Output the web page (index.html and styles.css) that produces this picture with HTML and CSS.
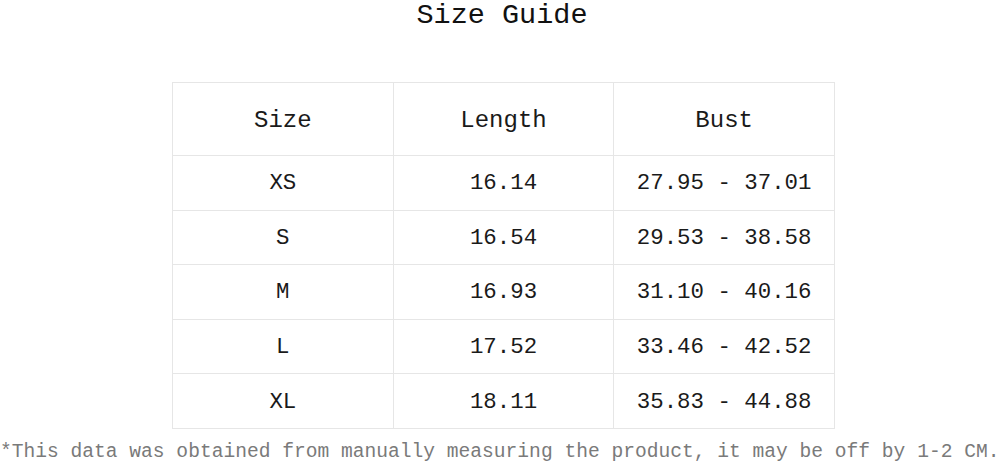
FILE: index.html
```html
<!DOCTYPE html>
<html>
<head>
<meta charset="utf-8">
<link rel="stylesheet" href="styles.css">
</head>
<body>
<div class="page">
  <h1 class="title">Size Guide</h1>
  <div class="table-wrap">
    <table class="sizes">
      <thead>
        <tr class="head-row"><th>Size</th><th>Length</th><th>Bust</th></tr>
      </thead>
      <tbody>
        <tr><td>XS</td><td>16.14</td><td>27.95 - 37.01</td></tr>
        <tr><td>S</td><td>16.54</td><td>29.53 - 38.58</td></tr>
        <tr><td>M</td><td>16.93</td><td>31.10 - 40.16</td></tr>
        <tr><td>L</td><td>17.52</td><td>33.46 - 42.52</td></tr>
        <tr><td>XL</td><td>18.11</td><td>35.83 - 44.88</td></tr>
      </tbody>
    </table>
  </div>
  <p class="note">*This data was obtained from manually measuring the product, it may be off by 1-2 CM.</p>
</div>
</body>
</html>
```

FILE: styles.css
```css
html, body {
  margin: 0;
  padding: 0;
  background: #ffffff;
}
body {
  width: 1000px;
  height: 466px;
  overflow: hidden;
  font-family: "Liberation Mono", "DejaVu Sans Mono", monospace;
  color: #1a1a1a;
}
.page {
  display: flex;
  flex-direction: column;
}
.title {
  margin: 0;
  font-weight: normal;
  font-size: 28.5px;
  line-height: 32px;
  text-align: center;
  padding-left: 4px;
  color: #111;
}
.table-wrap {
  margin-top: 50px;
  padding-left: 172px;
}
.sizes {
  border-collapse: collapse;
  table-layout: fixed;
  width: 663px;
}
.sizes th, .sizes td {
  border: 1px solid #e6e6e6;
  text-align: center;
  font-weight: normal;
}
.sizes th {
  font-size: 24px;
  height: 69px;
  padding: 3px 0 0 0;
}
.sizes td {
  font-size: 22.4px;
  height: 52.6px;
  padding: 1px 0 0 0;
}
.note {
  margin: 11px 0 0 0;
  font-size: 19.6px;
  line-height: 24px;
  color: #7a7a7a;
  white-space: nowrap;
}
```
